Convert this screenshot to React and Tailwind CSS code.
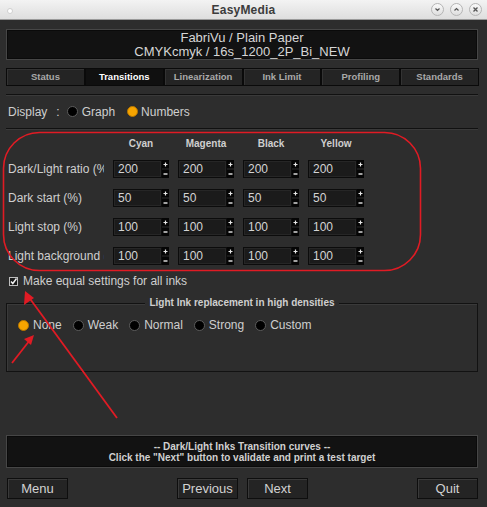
import React from "react";

function Radio({ on }) {
  return on ? (
    <span className="inline-block w-[11px] h-[11px] rounded-full bg-[#f6a400] border border-[#b87700] shrink-0" />
  ) : (
    <span className="inline-block w-[11px] h-[11px] rounded-full bg-black border border-[#5c5c5c] shrink-0" />
  );
}

function Spinner() {
  return (
    <svg width="7" height="18" viewBox="0 0 7 18" className="shrink-0">
      <rect x="0" y="0" width="7" height="8.5" fill="#050505" />
      <rect x="0" y="9.5" width="7" height="8.5" fill="#050505" />
      <path d="M1.5 4.5H5.5M3.5 2.5V6.5" stroke="#e8e8e8" strokeWidth="1.2" />
      <path d="M1.5 14H5.5" stroke="#e8e8e8" strokeWidth="1.4" />
    </svg>
  );
}

function Cell({ v }) {
  return (
    <div className="flex w-[56px] shrink-0">
      <div className="w-[49px] h-[18px] bg-[#1b1b1b] border border-[#0c0c0c] shadow-[inset_0_0_0_1px_#262626] text-[12px] leading-[16px] pl-[4px] text-[#d4d4d4]">
        {v}
      </div>
      <Spinner />
    </div>
  );
}

function Row({ label, vals }) {
  return (
    <div className="flex items-center h-[18px]">
      <div className="w-[96px] ml-[2px] mr-[9px] overflow-hidden whitespace-nowrap text-[12px] text-[#cfcfcf]">
        {label}
      </div>
      <div className="flex gap-[9px]">
        {vals.map((v, i) => (
          <Cell key={i} v={v} />
        ))}
      </div>
    </div>
  );
}

function Btn({ children }) {
  return (
    <div className="w-[61px] h-[21px] flex items-center justify-center bg-[#242424] border border-[#0e0e0e] shadow-[inset_1px_1px_0_#3a3a3a] text-[13px] text-[#d2d2d2]">
      {children}
    </div>
  );
}

function TitleBtn({ kind }) {
  return (
    <span className="w-[13px] h-[13px] rounded-full border border-[#b5b5b5] bg-gradient-to-b from-[#fafafa] to-[#dedede] flex items-center justify-center">
      <svg width="7" height="7" viewBox="0 0 7 7">
        {kind === "down" && <path d="M1.5 2.5L3.5 4.5L5.5 2.5" stroke="#555" strokeWidth="1.2" fill="none" />}
        {kind === "up" && <path d="M1.5 4.5L3.5 2.5L5.5 4.5" stroke="#555" strokeWidth="1.2" fill="none" />}
        {kind === "x" && <path d="M1.5 1.5L5.5 5.5M5.5 1.5L1.5 5.5" stroke="#555" strokeWidth="1.3" fill="none" />}
      </svg>
    </span>
  );
}

export default function App() {
  const tabs = ["Status", "Transitions", "Linearization", "Ink Limit", "Profiling", "Standards"];
  return (
    <div className="relative w-[487px] h-[507px] overflow-hidden bg-[#2d2d2d] font-['Liberation_Sans',Arial,sans-serif]">
      {/* title bar */}
      <div className="relative h-[20px] bg-gradient-to-b from-[#f3f3f3] to-[#dedede] border-b border-[#9a9a9a] flex items-center justify-center">
        <span className="absolute left-[7px] top-[8px] w-[6px] h-[6px] rounded-full bg-white border border-[#cfcfcf]" />
        <span className="text-[12px] font-bold text-[#3c3c3c] tracking-[0.2px]">EasyMedia</span>
        <div className="absolute right-[5px] top-[3px] flex gap-[6px]">
          <TitleBtn kind="down" />
          <TitleBtn kind="up" />
          <TitleBtn kind="x" />
        </div>
      </div>

      <div className="pl-[6px] pr-[9px] flex flex-col text-[#cfcfcf]">
        {/* header */}
        <div className="mt-[9px] h-[31px] bg-[#121212] border border-[#464646] shadow-[inset_0_0_0_1px_#0a0a0a] flex flex-col items-center justify-center text-[13px] leading-[14px] text-[#d6d6d6]">
          <div>FabriVu / Plain Paper</div>
          <div>CMYKcmyk / 16s_1200_2P_Bi_NEW</div>
        </div>

        {/* tabs */}
        <div className="mt-[8px] h-[18px] grid grid-cols-6 mr-[-1px]">
          {tabs.map((t) => (
            <div
              key={t}
              className={
                t === "Transitions"
                  ? "flex items-center justify-center bg-[#101010] border border-[#0a0a0a] text-[9.5px] font-bold text-white"
                  : "flex items-center justify-center bg-[#242424] border border-[#0a0a0a] shadow-[inset_1px_1px_0_#333] text-[9.5px] font-bold text-[#a9a9a9]"
              }
            >
              {t}
            </div>
          ))}
        </div>

        <div className="mt-[8px] h-px bg-[#111] shadow-[0_1px_0_#3a3a3a]" />

        {/* display row */}
        <div className="h-[33px] flex items-center pl-[2px] text-[12px]">
          <span>Display</span>
          <span className="ml-[9px]">:</span>
          <span className="ml-[7px] flex items-center gap-[4px]">
            <Radio />
            <span>Graph</span>
          </span>
          <span className="ml-[12px] flex items-center gap-[3px]">
            <Radio on />
            <span>Numbers</span>
          </span>
        </div>

        <div className="h-px bg-[#111] shadow-[0_1px_0_#3a3a3a]" />

        {/* table header */}
        <div className="mt-[9px] h-[12px] flex text-[10px] leading-[12px] font-bold text-[#cfcfcf]">
          <div className="w-[107px] shrink-0" />
          <div className="flex gap-[9px]">
            {["Cyan", "Magenta", "Black", "Yellow"].map((h) => (
              <div key={h} className="w-[56px] text-center">
                {h}
              </div>
            ))}
          </div>
        </div>

        <div className="mt-[10px] flex flex-col gap-[11px]">
          <Row label="Dark/Light ratio (%)" vals={["200", "200", "200", "200"]} />
          <Row label="Dark start (%)" vals={["50", "50", "50", "50"]} />
          <Row label="Light stop (%)" vals={["100", "100", "100", "100"]} />
          <Row label="Light background (%)" vals={["100", "100", "100", "100"]} />
        </div>

        {/* checkbox */}
        <div className="mt-[9px] h-[14px] flex items-center text-[12px] pl-[3px]">
          <svg width="9" height="9" viewBox="0 0 9 9" className="shrink-0">
            <rect x="0.5" y="0.5" width="8" height="8" fill="#1a1a1a" stroke="#bdbdbd" />
            <path d="M2 4.5L3.8 6.5L7.5 1.5" stroke="#f0f0f0" strokeWidth="1.5" fill="none" />
          </svg>
          <span className="ml-[5px]">Make equal settings for all inks</span>
        </div>

        {/* group box */}
        <div className="relative mt-[15px] h-[69px] border border-[#121212] shadow-[inset_1px_1px_0_#3a3a3a]">
          <div className="absolute left-0 right-0 top-[-7px] flex justify-center">
            <span className="bg-[#2d2d2d] px-[4px] text-[10px] leading-[12px] font-bold text-[#cfcfcf]">
              Light Ink replacement in high densities
            </span>
          </div>
          <div className="mt-[15px] ml-[11px] h-[12px] flex items-center text-[12px]">
            <span className="flex items-center gap-[4px]">
              <Radio on />
              None
            </span>
            <span className="ml-[11px] flex items-center gap-[4px]">
              <Radio />
              Weak
            </span>
            <span className="ml-[11px] flex items-center gap-[4px]">
              <Radio />
              Normal
            </span>
            <span className="ml-[11px] flex items-center gap-[4px]">
              <Radio />
              Strong
            </span>
            <span className="ml-[11px] flex items-center gap-[4px]">
              <Radio />
              Custom
            </span>
          </div>
        </div>

        {/* info box */}
        <div className="mt-[63px] h-[33px] bg-[#121212] border border-[#464646] shadow-[inset_0_0_0_1px_#0a0a0a] flex flex-col items-center justify-center text-[10px] leading-[11px] font-bold text-[#d0d0d0]">
          <div>-- Dark/Light Inks Transition curves --</div>
          <div>Click the "Next" button to validate and print a test target</div>
        </div>

        {/* buttons */}
        <div className="mt-[10px] flex justify-between pl-px">
          <Btn>Menu</Btn>
          <div className="flex gap-[9px]">
            <Btn>Previous</Btn>
            <Btn>Next</Btn>
          </div>
          <Btn>Quit</Btn>
        </div>
      </div>

      {/* red annotations */}
      <svg className="absolute inset-0 pointer-events-none" width="487" height="507" viewBox="0 0 487 507">
        <rect x="3.5" y="132.5" width="417" height="138" rx="36" ry="36" fill="none" stroke="#e01b24" strokeWidth="1.6" />
        <line x1="117" y1="418" x2="28" y2="296" stroke="#e01b24" strokeWidth="1.8" />
        <polygon points="25,291 24,305 34,298" fill="#e01b24" />
        <line x1="12" y1="363" x2="30" y2="340" stroke="#e01b24" strokeWidth="1.8" />
        <polygon points="34,335 24,339 31,345" fill="#e01b24" />
      </svg>
    </div>
  );
}
